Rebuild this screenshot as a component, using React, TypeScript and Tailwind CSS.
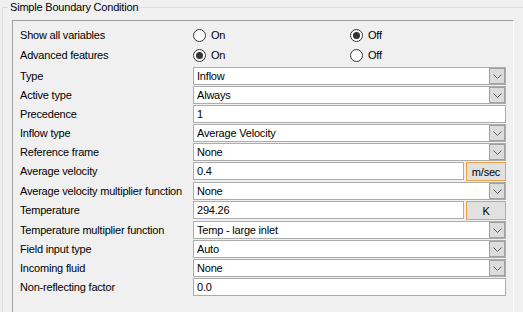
type Row =
  | { label: string; kind: 'select'; value: string }
  | { label: string; kind: 'text'; value: string; unit?: string };

const rows: Row[] = [
  { label: 'Type', kind: 'select', value: 'Inflow' },
  { label: 'Active type', kind: 'select', value: 'Always' },
  { label: 'Precedence', kind: 'text', value: '1' },
  { label: 'Inflow type', kind: 'select', value: 'Average Velocity' },
  { label: 'Reference frame', kind: 'select', value: 'None' },
  { label: 'Average velocity', kind: 'text', value: '0.4', unit: 'm/sec' },
  { label: 'Average velocity multiplier function', kind: 'select', value: 'None' },
  { label: 'Temperature', kind: 'text', value: '294.26', unit: 'K' },
  { label: 'Temperature multiplier function', kind: 'select', value: 'Temp - large inlet' },
  { label: 'Field input type', kind: 'select', value: 'Auto' },
  { label: 'Incoming fluid', kind: 'select', value: 'None' },
  { label: 'Non-reflecting factor', kind: 'text', value: '0.0' },
];

function Radio({ checked, label }: { checked?: boolean; label: string }) {
  return (
    <div className="flex items-center gap-[5px]">
      <span className="flex size-[13px] items-center justify-center rounded-full border border-[#333] bg-white">
        {checked && <span className="size-[7px] rounded-full bg-[#333]" />}
      </span>
      <span>{label}</span>
    </div>
  );
}

function RadioRow({ label, on }: { label: string; on: boolean }) {
  return (
    <div className="flex h-[20px] items-center">
      <span className="w-[173px]">{label}</span>
      <div className="w-[157px]">
        <Radio checked={on} label="On" />
      </div>
      <Radio checked={!on} label="Off" />
    </div>
  );
}

function Field({ row }: { row: Row }) {
  if (row.kind === 'select') {
    return (
      <div className="flex h-[18px] w-[313px] items-center border border-[#acacac] bg-white pl-[3px]">
        <span className="flex-1 truncate">{row.value}</span>
        <span className="flex h-[16px] w-[16px] items-center justify-center border border-[#a0a0a0] bg-[#dcdcdc]">
          <svg width="9" height="6" viewBox="0 0 9 6" className="mt-[2px]">
            <polyline points="0.5,0.5 4.5,4.5 8.5,0.5" fill="none" stroke="#606060" strokeWidth="1" />
          </svg>
        </span>
      </div>
    );
  }
  return (
    <div className="flex w-[313px] gap-[2px]">
      <div className="flex h-[18px] flex-1 items-center border border-[#acacac] bg-white pl-[3px]">
        {row.value}
      </div>
      {row.unit && (
        <div className="flex h-[19px] w-[40px] items-center justify-center border border-[#f0a040] bg-[#e1e1e1]">
          {row.unit}
        </div>
      )}
    </div>
  );
}

export default function App() {
  return (
    <div
      className="relative h-[312px] w-[523px] overflow-hidden whitespace-nowrap bg-[#f0f0f0] text-[11px] leading-[14px] tracking-[-0.2px] text-black"
      style={{ fontFamily: '"Liberation Sans", Arial, sans-serif' }}
    >
      <div className="ml-[2px] mt-[7px] w-[540px] border-l border-t border-[#dcdcdc]">
        <span className="absolute left-[8px] top-0 bg-[#f0f0f0] px-[2px]">Simple Boundary Condition</span>
        <div className="ml-[9px] mt-[12px] h-[320px] w-[502px] border-b border-l border-r border-t border-b-white border-l-[#a0a0a0] border-r-white border-t-[#a0a0a0] pl-[7px] pt-[4px]">
          <RadioRow label="Show all variables" on={false} />
          <RadioRow label="Advanced features" on={true} />
          <div className="mt-[1px]">
            {rows.map((r) => (
              <div
                key={r.label}
                className={`flex items-start pt-[1px] ${r.kind === 'text' && r.unit ? 'h-[20px]' : 'h-[19px]'}`}
              >
                <span className="w-[173px] pt-[2px]">{r.label}</span>
                <Field row={r} />
              </div>
            ))}
          </div>
        </div>
      </div>
    </div>
  );
}
